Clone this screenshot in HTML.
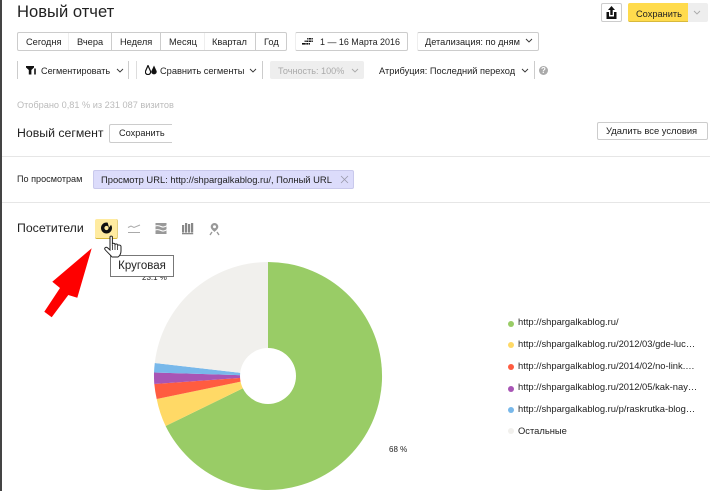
<!DOCTYPE html>
<html><head><meta charset="utf-8">
<style>
html,body{margin:0;padding:0;background:#fff}
body{width:710px;height:491px;position:relative;overflow:hidden;font-family:"Liberation Sans",Arial,sans-serif;color:#222;font-size:9.25px}
.a{position:absolute;white-space:nowrap}
.b{position:absolute;box-sizing:border-box;border:1px solid #ccc;border-radius:2px;background:#fff}
.l{position:absolute;background:#ddd}
.t{position:absolute;white-space:nowrap;line-height:12px}
</style></head><body>
<div class="l" style="left:0;top:0;width:2px;height:491px;background:#444"></div>

<div class="a" style="left:17px;top:1px;font-size:16.6px;line-height:22px;color:#222">Новый отчет</div>

<!-- top right -->
<div class="b" style="left:601px;top:3px;width:21px;height:19px"></div>
<svg class="a" style="left:601px;top:3px" width="21" height="19" viewBox="0 0 21 19"><path d="M10.5 3 L14 7 H11.7 V12 H9.3 V7 H7 Z M5.5 9 H8 V13.5 H13 V9 H15.5 V16 H5.5 Z" fill="#111"/></svg>
<div class="a" style="left:628px;top:3px;width:60px;height:19px;background:#ffdb4d;border-bottom:1px solid #d8b93c;box-sizing:border-box;border-radius:2px 0 0 2px"></div>
<div class="t" style="left:636px;top:8px">Сохранить</div>
<div class="a" style="left:688px;top:3px;width:20px;height:19px;background:#eee;border-radius:0 2px 2px 0"></div>
<svg class="a" style="left:693px;top:10px" width="8" height="5"><path d="M1 1 L4 4 L7 1" fill="none" stroke="#aaa" stroke-width=".9"/></svg>

<!-- row 1 -->
<div class="b" style="left:17px;top:32px;width:270px;height:19px"></div>
<div class="l" style="left:68px;top:33px;width:1px;height:17px;background:#eee"></div>
<div class="l" style="left:111px;top:33px;width:1px;height:17px;background:#ccc"></div>
<div class="l" style="left:160px;top:33px;width:1px;height:17px;background:#ccc"></div>
<div class="l" style="left:204px;top:33px;width:1px;height:17px;background:#eee"></div>
<div class="l" style="left:255px;top:33px;width:1px;height:17px;background:#ccc"></div>
<div class="t" style="left:26px;top:36px">Сегодня</div>
<div class="t" style="left:77px;top:36px">Вчера</div>
<div class="t" style="left:120px;top:36px">Неделя</div>
<div class="t" style="left:169px;top:36px">Месяц</div>
<div class="t" style="left:212px;top:36px">Квартал</div>
<div class="t" style="left:264px;top:36px">Год</div>

<div class="b" style="left:295px;top:32px;width:113px;height:19px;border-left-color:#eee"></div>
<svg class="a" style="left:302px;top:38px" width="11" height="7" fill="#111"><rect x="5.2" y="0" width="5.6" height="1.5"/><rect x="2.6" y="2.5" width="8.2" height="1.5"/><rect x="0" y="5" width="8" height="1.6"/><path d="M4 0V7M6.6 0V7M9.2 0V7" stroke="#fff" stroke-width=".5"/></svg>
<div class="t" style="left:320px;top:36px;font-size:8.95px">1 — 16 Марта 2016</div>

<div class="b" style="left:417px;top:32px;width:122px;height:19px;border-left-color:#eee"></div>
<div class="t" style="left:425px;top:36px;font-size:9.2px">Детализация: по дням</div>
<svg class="a" style="left:525px;top:38px" width="8" height="5"><path d="M1 1 L4 4 L7 1" fill="none" stroke="#333" stroke-width=".9"/></svg>

<!-- row 2 -->
<div class="l" style="left:17px;top:61px;width:1px;height:18px;background:#ccc"></div>
<svg class="a" style="left:26px;top:66px" width="11" height="9"><path d="M0 0 H8 V1.5 L5.4 4 V8.5 H2.8 V4 L0 1.5 Z" fill="#111"/><path d="M9 2.5 V8.5" stroke="#111" stroke-width="1.6"/></svg>
<div class="t" style="left:41px;top:65px;font-size:9.1px">Сегментировать</div>
<svg class="a" style="left:116px;top:68px" width="8" height="5"><path d="M1 1 L4 4 L7 1" fill="none" stroke="#333" stroke-width=".9"/></svg>
<div class="l" style="left:128px;top:61px;width:1px;height:18px;background:#ccc"></div>
<div class="l" style="left:136px;top:61px;width:1px;height:18px;background:#ddd"></div>
<svg class="a" style="left:145px;top:65px" width="12" height="10"><path d="M3 0.5 L5.4 6 A2.6 2.6 0 1 1 0.6 6 Z" fill="none" stroke="#111" stroke-width="1.2"/><path d="M9 0.5 L11.6 6 A2.7 2.7 0 1 1 6.4 6 Z" fill="#111"/></svg>
<div class="t" style="left:160px;top:65px">Сравнить сегменты</div>
<svg class="a" style="left:249px;top:68px" width="8" height="5"><path d="M1 1 L4 4 L7 1" fill="none" stroke="#333" stroke-width=".9"/></svg>
<div class="l" style="left:262px;top:61px;width:1px;height:18px;background:#ccc"></div>
<div class="a" style="left:270px;top:61px;width:94px;height:18px;background:#eee;border-radius:2px"></div>
<div class="t" style="left:278px;top:65px;color:#aaa;font-size:9.1px">Точность: 100%</div>
<svg class="a" style="left:351px;top:68px" width="8" height="5"><path d="M1 1 L4 4 L7 1" fill="none" stroke="#aaa" stroke-width=".9"/></svg>
<div class="t" style="left:379px;top:65px">Атрибуция: Последний переход</div>
<svg class="a" style="left:521px;top:68px" width="8" height="5"><path d="M1 1 L4 4 L7 1" fill="none" stroke="#333" stroke-width=".9"/></svg>
<div class="l" style="left:534px;top:61px;width:1px;height:18px;background:#ccc"></div>
<div class="a" style="left:539px;top:66px;width:9px;height:9px;border-radius:50%;background:#aaa;color:#fff;font-size:8px;line-height:9px;text-align:center;font-weight:bold">?</div>

<div class="t" style="left:17px;top:99px;color:#bbb;font-size:9.2px">Отобрано 0,81 % из 231 087 визитов</div>

<!-- segment -->
<div class="a" style="left:17px;top:126px;font-size:12.3px;line-height:15px">Новый сегмент</div>
<div class="a" style="left:109px;top:124px;width:63px;height:19px;box-sizing:border-box;border:1px solid #ccc;border-right:0;border-radius:2px 0 0 2px"></div>
<div class="t" style="left:119px;top:127px;font-size:9.2px">Сохранить</div>
<div class="b" style="left:597px;top:122px;width:111px;height:18px"></div>
<div class="t" style="left:606px;top:125px;font-size:9.4px">Удалить все условия</div>

<div class="l" style="left:2px;top:156px;width:708px;height:1px;background:#e6e6e6"></div>

<div class="t" style="left:17px;top:173px;font-size:9.1px">По просмотрам</div>
<div class="a" style="left:93px;top:170px;width:261px;height:19px;box-sizing:border-box;background:#dcdcfb;border:1px solid #c9c9ec;border-radius:2px"></div>
<div class="t" style="left:101px;top:174px;font-size:9.4px">Просмотр URL: http://shpargalkablog.ru/, Полный URL</div>
<svg class="a" style="left:340px;top:175px" width="9" height="9"><path d="M1 1 L8 8 M8 1 L1 8" stroke="#99a" stroke-width="0.8"/></svg>

<div class="l" style="left:2px;top:202px;width:708px;height:1px;background:#e6e6e6"></div>

<!-- visitors -->
<div class="a" style="left:17px;top:221px;font-size:12.3px;line-height:15px">Посетители</div>
<div class="a" style="left:95px;top:219px;width:23px;height:20px;box-sizing:border-box;background:#ffeba0;border-bottom:1px solid #d8b93c;border-right:1px solid #e3cf80;border-radius:2px"></div>
<svg class="a" style="left:95px;top:219px" width="23" height="20"><circle cx="11.5" cy="9" r="3.8" fill="none" stroke="#111" stroke-width="3.4"/><path d="M12.5 3 L17.5 4 L14 8.5 Z" fill="#ffeba0"/></svg>
<svg class="a" style="left:127px;top:224px" width="14" height="10" fill="none" stroke="#aaa"><path d="M1 3.5 L4 2 L7 3.5 L13 1"/><path d="M1 8.5 H13"/></svg>
<svg class="a" style="left:155px;top:223px" width="12" height="12"><rect x="0.5" y="0" width="11" height="11" fill="#999"/><path d="M0 3 Q3 2 6 3.5 T12 2.5 M0 7 Q3 6 6 7.5 T12 6.5" fill="none" stroke="#fff" stroke-width="1"/></svg>
<svg class="a" style="left:182px;top:223px" width="12" height="12" fill="#888"><rect x="0" y="2" width="2.2" height="7.6"/><rect x="3" y="0" width="2.2" height="9.6"/><rect x="6" y="1" width="2.2" height="8.6"/><rect x="9" y="0" width="2.2" height="9.6"/><rect x="0" y="10" width="11.2" height="1.3"/></svg>
<svg class="a" style="left:208px;top:222px" width="13" height="14"><path d="M6.5 1 A3.8 3.8 0 0 1 10.3 4.8 C10.3 7 7.5 9 6.5 10 C5.5 9 2.7 7 2.7 4.8 A3.8 3.8 0 0 1 6.5 1 Z" fill="#999"/><circle cx="6.5" cy="4.8" r="1.5" fill="#fff"/><path d="M2 13 L4 10 M11 13 L9 10" stroke="#999" stroke-width="1.4"/></svg>

<!-- pie -->
<svg class="a" style="left:0;top:0" width="710" height="491">
<path d="M268 376 V262 A114 114 0 1 1 165.6 426 Z" fill="#99cc66"/>
<path d="M268 376 L165.6 426 A114 114 0 0 1 156.7 399 Z" fill="#ffd966"/>
<path d="M268 376 L156.7 399 A114 114 0 0 1 154.3 384 Z" fill="#ff5c40"/>
<path d="M268 376 L154.3 384 A114 114 0 0 1 154 372.5 Z" fill="#a855b5"/>
<path d="M268 376 L154 372.5 A114 114 0 0 1 154.8 363 Z" fill="#78b8ea"/>
<path d="M268 376 L154.8 363 A114 114 0 0 1 268 262 Z" fill="#f1f0ed"/>
<circle cx="268" cy="376" r="28" fill="#fff"/>
</svg>
<div class="t" style="left:142px;top:272px;font-size:8px">23.1 %</div>
<div class="t" style="left:389px;top:444px;font-size:8px">68 %</div>

<!-- tooltip -->
<div class="a" style="left:110px;top:255px;width:64px;height:22px;box-sizing:border-box;background:#fff;border:1px solid #777;font-size:11.5px;line-height:20px;text-align:center">Круговая</div>

<!-- hand cursor -->
<svg class="a" style="left:104px;top:235px" width="20" height="24"><path d="M6 2 C6 0.8 8.4 0.8 8.4 2 V9 C9 8 11 8 11 9.5 C11.8 8.6 13.6 8.8 13.6 10.3 C14.4 9.6 17 10 17 11.5 V16 C17 19 15.5 21 14 22 H8 C6.5 20 3 17 1 14.5 C0 13 2 11.5 3.5 12.8 L6 15 Z" fill="#fff" stroke="#222" stroke-width="1"/><path d="M8.5 10 V15 M11 10 V15 M13.6 11 V15" stroke="#222" stroke-width="0.8"/></svg>

<!-- red arrow -->
<svg class="a" style="left:0;top:0" width="710" height="491" pointer-events="none"><path d="M91.7 248.3 L77.3 297.7 L68.3 295 L51.7 317.3 L44.3 311.7 L60 288 L52.3 281.7 Z" fill="#fe0000"/></svg>

<!-- legend -->
<div class="a" style="left:508px;top:320.5px;width:6px;height:6px;border-radius:50%;background:#99cc66"></div>
<div class="t" style="left:518px;top:316px;font-size:9.4px">http://shpargalkablog.ru/</div>
<div class="a" style="left:508px;top:342px;width:6px;height:6px;border-radius:50%;background:#ffd966"></div>
<div class="t" style="left:518px;top:338px;font-size:9.4px">http://shpargalkablog.ru/2012/03/gde-luc…</div>
<div class="a" style="left:508px;top:364px;width:6px;height:6px;border-radius:50%;background:#ff5c40"></div>
<div class="t" style="left:518px;top:360px;font-size:9.4px">http://shpargalkablog.ru/2014/02/no-link.…</div>
<div class="a" style="left:508px;top:385.5px;width:6px;height:6px;border-radius:50%;background:#a855b5"></div>
<div class="t" style="left:518px;top:381px;font-size:9.4px">http://shpargalkablog.ru/2012/05/kak-nay…</div>
<div class="a" style="left:508px;top:407px;width:6px;height:6px;border-radius:50%;background:#78b8ea"></div>
<div class="t" style="left:518px;top:403px;font-size:9.4px">http://shpargalkablog.ru/p/raskrutka-blog…</div>
<div class="a" style="left:508px;top:428px;width:6px;height:6px;border-radius:50%;background:#f1f0ed"></div>
<div class="t" style="left:518px;top:425px;font-size:9.4px">Остальные</div>
</body></html>
